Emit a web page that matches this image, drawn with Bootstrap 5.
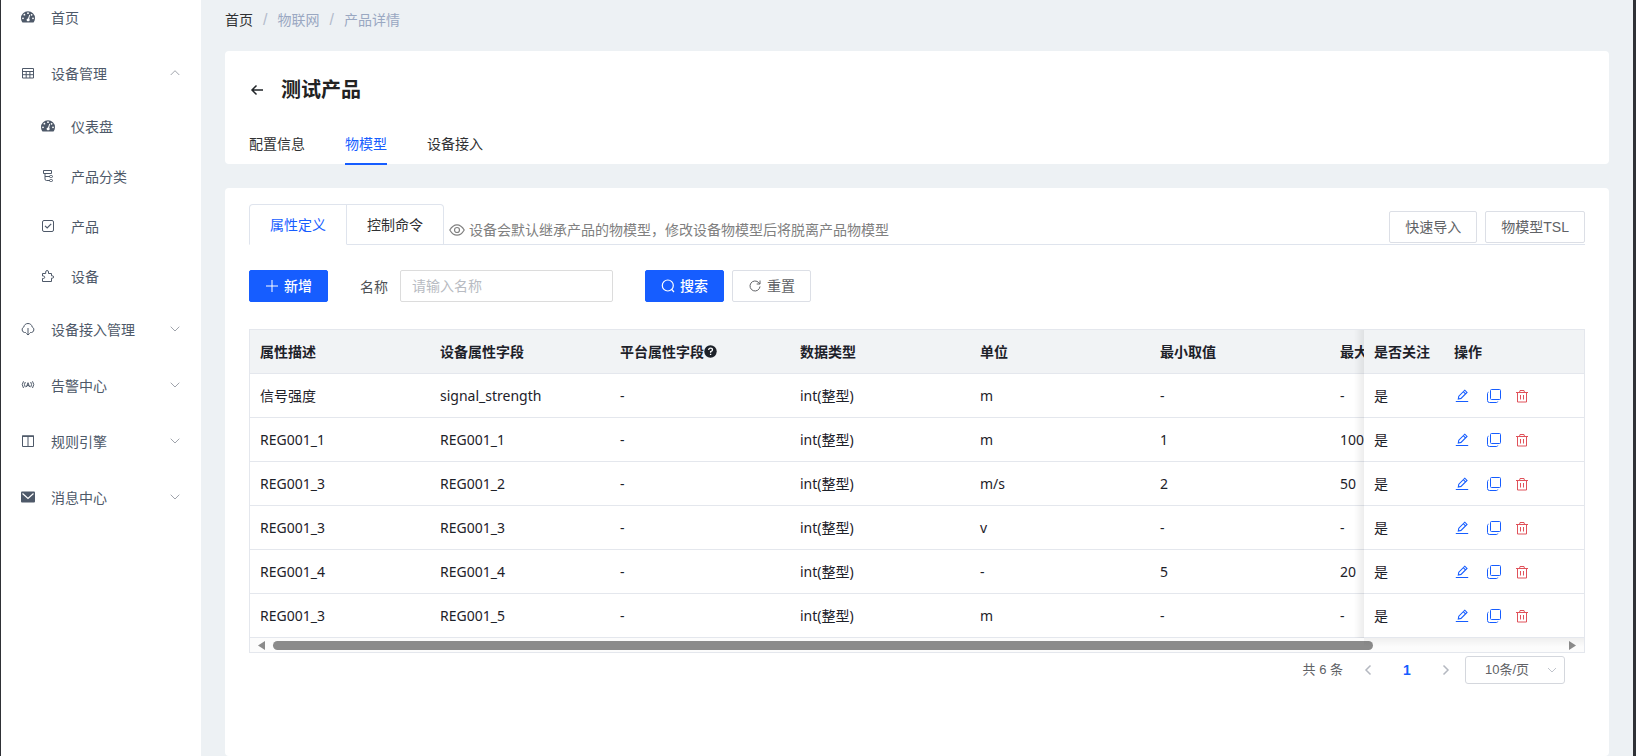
<!DOCTYPE html>
<html lang="zh-CN">
<head>
<meta charset="utf-8">
<meta name="viewport" content="width=device-width, initial-scale=1">
<title>产品详情</title>
<link href="https://cdn.jsdelivr.net/npm/bootstrap@5.3.0/dist/css/bootstrap.min.css" rel="stylesheet">
<style>
:root{--brand:#165dff;--ink:#1d2129;--line:#e4e7ed}
body{font-family:"Liberation Sans","Noto Sans CJK SC",sans-serif;font-size:14px;line-height:22px;color:var(--ink);background:#edf1f4}
a{text-decoration:none}
svg{display:block;flex:none}
.app-shell{min-height:100vh;border-left:1px solid #2f3136;border-right:3px solid #2f3136}
.side-menu{width:200px;flex:none;background:#fff;margin-top:-10px}
.side-menu a{color:#4e5969;height:56px;padding:0 21px 0 20px}
.side-menu a span{margin-left:16px}
.side-menu .sub-item{height:50px;padding-left:40px}
.side-menu .caret{color:#a0a4ac;margin-left:auto}
.side-menu .icon{margin-top:-2px}
.content-area{min-width:0;padding:0 24px}
.app-shell,.content-area{overflow:hidden}
.crumbs{--bs-breadcrumb-divider-color:#b4bccc;height:51px;padding-bottom:11px}
.crumbs .breadcrumb-item+.breadcrumb-item{padding-left:10px}
.crumbs .breadcrumb-item+.breadcrumb-item::before{padding-right:10px;font-size:16px}
.crumbs a{color:#9aa8c2}
.crumbs .home-link{color:#303133}
.panel{background:#fff;border-radius:4px}
.head-panel{height:113px;margin-bottom:24px;padding:27px 24px 0}
.page-title{font-size:20px;line-height:24px;font-weight:700;color:#222}
.line-tabs{gap:40px;margin-top:31px}
.line-tabs a{color:#303133;height:32px}
.line-tabs a.on{color:var(--brand);border-bottom:2px solid var(--brand)}
.body-panel{padding:16px 24px}
.card-tabs{height:41px;border-bottom:1px solid #dfe4ed}
.card-tabs .tab-link{color:#303133;height:41px;padding:0 20px;border:1px solid #dfe4ed;border-left:0;display:flex;align-items:center}
.card-tabs .tab-link.on{color:var(--brand);border-left:1px solid #dfe4ed;border-bottom-color:#fff;border-top-left-radius:4px}
.card-tabs .tab-link:last-of-type{border-top-right-radius:4px}
.hint{color:#808080;margin-left:5px;padding-top:11px}
.tab-actions{padding-bottom:1px}
.tool-btn{--bs-btn-font-size:14px;--bs-btn-line-height:22px;--bs-btn-padding-y:4px;--bs-btn-padding-x:15px;--bs-btn-border-radius:2px;--bs-btn-color:#606266;--bs-btn-bg:#fff;--bs-btn-border-color:#dcdfe6;height:32px;display:flex;align-items:center;gap:5px}
.tool-btn.solid{--bs-btn-color:#fff;--bs-btn-bg:var(--brand);--bs-btn-border-color:var(--brand);font-weight:500}
.filters{margin:25px 0 27px}
.filters label{margin:2px 12px 0 32px;color:#4e5155}
.name-input{width:213px;height:32px;font-size:14px;padding:4px 11px;border:1px solid #dcdcdc;border-radius:2px;margin-right:32px}
.name-input::placeholder{color:#b8bbc2}
.grid-box{border:1px solid var(--line);position:relative}
.grid-scroll{overflow:hidden}
.grid-table{width:1580px;table-layout:fixed;border-collapse:separate;border-spacing:0;font-family:"Noto Sans","Noto Sans CJK SC",sans-serif}
.grid-table th,.grid-table td{height:44px;padding:0 10px;border-bottom:1px solid var(--line);background:#fff;white-space:nowrap}
.grid-table th{background:#f1f3f5;font-weight:700}
.grid-table .pin{position:sticky;z-index:1}
.grid-table .pin-a{right:140px}
.grid-table .pin-b{right:0}
.grid-table .pin-a::before{content:"";position:absolute;top:0;bottom:-1px;right:100%;width:10px;background:linear-gradient(to left,rgba(0,0,0,.07),rgba(0,0,0,0))}
.acts{gap:14px;padding-left:1px}
.act{border:0;background:none;padding:0;color:var(--brand)}
.act.del{color:#e0525a}
.bar{height:14px;background:#fcfcfc;padding:0 8px}
.bar .shade{right:0;top:0;width:220px;height:9px;background:linear-gradient(rgba(0,0,0,.05),rgba(0,0,0,0))}
.bar .track{margin:0 8px;flex:1}
.bar .thumb{width:85.4%;height:9px;border-radius:5px;background:#8b8b8b}
.pager{padding:3px 20px 0 0;color:#606266;font-size:13px}
.pager button{border:0;background:none;padding:0;color:#b4b8c0;height:28px}
.pager .page-no{width:60px;color:var(--brand);font-size:14px}
.size-select{width:100px;height:28px;font-size:13px;line-height:20px;color:#606266;padding:0 0 0 19px;margin-left:10px;border:1px solid #d4d7dd;border-radius:3px;background:#fff url("data:image/svg+xml,%3Csvg xmlns='http://www.w3.org/2000/svg' width='10' height='7' viewBox='0 0 10 7' fill='none' stroke='%23c0c4cc'%3E%3Cpath d='M1 1l4 4 4-4'/%3E%3C/svg%3E") no-repeat right 7px center/10px 7px}
</style>
</head>
<body>
<svg width="0" height="0" class="position-absolute" aria-hidden="true">
 <symbol id="gauge" viewBox="0 0 14 14"><path fill="currentColor" fill-rule="evenodd" d="M7 1.200A7 7 0 0 0 0 8.200c0 1.500.4 2.800 1.100 3.900.1.200.3.300.5.300h10.800c.2 0 .4-.1.500-.3.700-1.100 1.100-2.400 1.100-3.900A7 7 0 0 0 7 1.200zM7 2.300a.9.900 0 1 1 0 1.800.9.900 0 0 1 0-1.800zM3.400 3.800a.9.900 0 1 1 0 1.800.9.900 0 0 1 0-1.800zM2 7.400a.9.900 0 1 1 0 1.800.9.900 0 0 1 0-1.800zM12 7.400a.9.900 0 1 1 0 1.800.9.900 0 0 1 0-1.800zM10.600 3.900a.9.900 0 1 1 0 1.800.9.900 0 0 1 0-1.800zM8.300 4.700l.8.200-.9 3.900c.7.700.7 1.800-.2 2.300-1 .5-2.300 0-2.400-1.100 0-.8.500-1.400 1.400-1.500z"/></symbol>
 <symbol id="tablei" viewBox="0 0 14 14"><path fill="none" stroke="currentColor" d="M1.500 2.500h11v9.500h-11zM1.500 5.500h11M1.500 8.700h11M5.200 5.500V12M8.900 5.500V12"/></symbol>
 <symbol id="tree" viewBox="0 0 14 14"><path fill="none" stroke="currentColor" d="M2.500 1.500h8v3h-8zM4 4.500V10q0 1.500 1.500 1.500H9M4 7.500h5"/><rect x="8.500" y="6.500" width="3" height="2" rx="1" fill="none" stroke="currentColor"/><rect x="8.500" y="10.500" width="3" height="2" rx="1" fill="none" stroke="currentColor"/></symbol>
 <symbol id="check" viewBox="0 0 14 14"><rect x="1.500" y="1.500" width="11" height="11" rx="1.500" fill="none" stroke="currentColor"/><path fill="none" stroke="currentColor" stroke-width="1.200" d="M4 6.800l2.200 2.200 4-4.200"/></symbol>
 <symbol id="puzzle" viewBox="0 0 14 14"><path fill="none" stroke="currentColor" d="M1.500 4.500h3.200V3q0-1.500 1.400-1.500T7.500 3v1.500h3v2.300h.8q1.300 0 1.300 1.200t-1.300 1.200h-.8v3.300h-9V9.500h.9q1.300 0 1.300-1.200T2.400 7h-.9z"/></symbol>
 <symbol id="cloud" viewBox="0 0 14 14"><path fill="none" stroke="currentColor" d="M4.800 10.500H3.500a2.900 2.900 0 0 1-.7-5.500C3.200 2.800 4.800 1.500 7 1.500s3.800 1.300 4.200 3.500a2.900 2.900 0 0 1-.7 5.500H9.200M7 6v7M5.300 11.400L7 13l1.700-1.600"/></symbol>
 <symbol id="signal" viewBox="0 0 14 14"><path fill="none" stroke="currentColor" d="M2.500 3.300Q0 6.500 2.500 10M4.300 4Q2.600 6.500 4.300 9.200M11.500 3.300Q14 6.500 11.500 10M9.700 4Q11.400 6.500 9.700 9.200M5.400 9L7 4.700 8.600 9M6 7.600h2"/></symbol>
 <symbol id="columns" viewBox="0 0 14 14"><path fill="none" stroke="currentColor" d="M1.500 2h11v10.500h-11zM7 2v10.500"/><path fill="none" stroke="currentColor" stroke-width="1.500" d="M1 2.200h12"/></symbol>
 <symbol id="mail" viewBox="0 0 14 14"><rect y="1.500" width="14" height="11" rx="1" fill="currentColor"/><path fill="none" stroke="#fff" stroke-width="1.200" d="M1.500 3.500L7 8.500l5.500-5"/></symbol>
 <symbol id="down" viewBox="0 0 10 6"><path fill="none" stroke="currentColor" d="M.7.700L5 5 9.300.7"/></symbol>
 <symbol id="up" viewBox="0 0 10 6"><path fill="none" stroke="currentColor" d="M.7 5L5 .7 9.300 5"/></symbol>
 <symbol id="edit" viewBox="0 0 14 14"><path fill="none" stroke="currentColor" stroke-width="1.100" d="M.8 12.500h12.400M3.300 10l.5-2.800 6-6 2.200 2.200-6 6zM8.300 2.700l2.200 2.200"/></symbol>
 <symbol id="copy" viewBox="0 0 14 14"><rect x="3.500" y=".5" width="10" height="10" rx="1" fill="none" stroke="currentColor"/><path fill="none" stroke="currentColor" d="M1.500 3.200Q.5 3.500.5 4.500v7a2 2 0 0 0 2 2h7q1 0 1.300-1"/></symbol>
 <symbol id="trash" viewBox="0 0 14 14"><path fill="none" stroke="currentColor" d="M1 3.500h12M2.500 3.500v9.500h9V3.500M4.500 3.500l.5-2h4l.5 2M5.500 6v4.500M8.500 6v4.500"/></symbol>
</svg>
<div class="app-shell d-flex">
 <nav class="side-menu d-flex flex-column">
  <a href="#" class="d-flex align-items-center"><svg class="icon" width="14" height="14"><use href="#gauge"/></svg><span>首页</span></a>
  <a href="#" class="d-flex align-items-center"><svg class="icon" width="14" height="14"><use href="#tablei"/></svg><span>设备管理</span><svg class="icon caret" width="10" height="6"><use href="#up"/></svg></a>
  <a href="#" class="sub-item d-flex align-items-center"><svg class="icon" width="14" height="14"><use href="#gauge"/></svg><span>仪表盘</span></a>
  <a href="#" class="sub-item d-flex align-items-center"><svg class="icon" width="14" height="14"><use href="#tree"/></svg><span>产品分类</span></a>
  <a href="#" class="sub-item d-flex align-items-center"><svg class="icon" width="14" height="14"><use href="#check"/></svg><span>产品</span></a>
  <a href="#" class="sub-item d-flex align-items-center"><svg class="icon" width="14" height="14"><use href="#puzzle"/></svg><span>设备</span></a>
  <a href="#" class="d-flex align-items-center"><svg class="icon" width="14" height="14"><use href="#cloud"/></svg><span>设备接入管理</span><svg class="icon caret" width="10" height="6"><use href="#down"/></svg></a>
  <a href="#" class="d-flex align-items-center"><svg class="icon" width="14" height="14"><use href="#signal"/></svg><span>告警中心</span><svg class="icon caret" width="10" height="6"><use href="#down"/></svg></a>
  <a href="#" class="d-flex align-items-center"><svg class="icon" width="14" height="14"><use href="#columns"/></svg><span>规则引擎</span><svg class="icon caret" width="10" height="6"><use href="#down"/></svg></a>
  <a href="#" class="d-flex align-items-center"><svg class="icon" width="14" height="14"><use href="#mail"/></svg><span>消息中心</span><svg class="icon caret" width="10" height="6"><use href="#down"/></svg></a>
 </nav>
 <main class="content-area flex-grow-1 d-flex flex-column">
  <ol class="crumbs breadcrumb align-items-center mb-0">
   <li class="breadcrumb-item"><a href="#" class="home-link">首页</a></li>
   <li class="breadcrumb-item"><a href="#">物联网</a></li>
   <li class="breadcrumb-item"><a href="#">产品详情</a></li>
  </ol>
  <section class="panel head-panel">
   <div class="d-flex align-items-center gap-3">
    <a href="#" class="text-dark" aria-label="返回"><svg width="16" height="16" viewBox="0 0 16 16" fill="none" stroke="currentColor" stroke-width="1.500"><path d="M14 8H3M7.500 3.500L3 8l4.500 4.500"/></svg></a>
    <h1 class="page-title mb-0">测试产品</h1>
   </div>
   <nav class="line-tabs d-flex"><a href="#">配置信息</a><a href="#" class="on">物模型</a><a href="#">设备接入</a></nav>
  </section>
  <section class="panel body-panel flex-grow-1">
   <div class="card-tabs d-flex">
    <a href="#" class="tab-link on">属性定义</a><a href="#" class="tab-link">控制命令</a>
    <div class="hint d-flex align-items-center gap-1"><svg width="16" height="16" viewBox="0 0 16 16" fill="none" stroke="currentColor" stroke-width="1.200"><path d="M.8 8C3 4.200 5.500 2.800 8 2.800S13 4.200 15.200 8C13 11.800 10.500 13.200 8 13.200S3 11.800.8 8z"/><circle cx="8" cy="8" r="2.500"/></svg><span>设备会默认继承产品的物模型，修改设备物模型后将脱离产品物模型</span></div>
    <div class="tab-actions d-flex gap-2 ms-auto align-self-end"><button type="button" class="btn tool-btn">快速导入</button><button type="button" class="btn tool-btn">物模型TSL</button></div>
   </div>
   <form class="filters d-flex align-items-center">
    <button type="button" class="btn tool-btn solid"><svg width="14" height="14" viewBox="0 0 14 14" stroke="currentColor" fill="none"><path d="M7 1v12M1 7h12"/></svg>新增</button>
    <label for="pname">名称</label>
    <input id="pname" type="text" class="form-control name-input" placeholder="请输入名称">
    <button type="button" class="btn tool-btn solid me-2"><svg width="14" height="14" viewBox="0 0 14 14" stroke="currentColor" stroke-width="1.200" fill="none"><circle cx="6.800" cy="6.500" r="5.500"/><path d="M10.700 10.500L13 13"/></svg>搜索</button>
    <button type="reset" class="btn tool-btn"><svg width="14" height="14" viewBox="0 0 14 14" stroke="currentColor" fill="none"><path d="M12 7.500A5 5 0 1 1 10.800 3.700L12 5M12 1.500V5H8.700"/></svg>重置</button>
   </form>
   <div class="grid-box">
    <div class="grid-scroll">
     <table class="grid-table">
      <colgroup><col width="180"><col width="180"><col width="180"><col width="180"><col width="180"><col width="180"><col width="280"><col width="80"><col width="140"></colgroup>
      <thead><tr><th>属性描述</th><th>设备属性字段</th><th><span class="d-flex align-items-center">平台属性字段<svg width="13" height="13" viewBox="0 0 13 13"><circle cx="6.500" cy="6.500" r="6.200" fill="currentColor"/><path d="M4.700 5q0-1.900 1.900-1.900T8.500 4.900Q8.500 6 6.600 6.600v1.200M6.600 8.700v1.400" fill="none" stroke="#fff" stroke-width="1.300"/></svg></span></th><th>数据类型</th><th>单位</th><th>最小取值</th><th>最大</th><th class="pin pin-a">是否关注</th><th class="pin pin-b">操作</th></tr></thead>
      <tbody id="rows"></tbody>
     </table>
    </div>
    <div class="bar d-flex align-items-center position-relative">
     <div class="shade position-absolute"></div>
     <svg width="7" height="9" viewBox="0 0 7 9"><path d="M7 0v9L0 4.500z" fill="#8b8b8b"/></svg>
     <div class="track"><div class="thumb"></div></div>
     <svg width="7" height="9" viewBox="0 0 7 9"><path d="M0 0v9l7-4.500z" fill="#8b8b8b"/></svg>
    </div>
   </div>
   <div class="pager d-flex align-items-center justify-content-end">
    <span class="me-3">共 6 条</span>
    <button type="button" class="px-1" aria-label="上一页"><svg width="10" height="12" viewBox="0 0 10 12" fill="none" stroke="currentColor" stroke-width="1.500"><path d="M7.500 1.500L3 6l4.500 4.500"/></svg></button>
    <button type="button" class="page-no fw-bold">1</button>
    <button type="button" class="px-1" aria-label="下一页"><svg width="10" height="12" viewBox="0 0 10 12" fill="none" stroke="currentColor" stroke-width="1.500"><path d="M2.500 1.500L7 6l-4.500 4.500"/></svg></button>
    <select class="form-select size-select" aria-label="每页条数"><option>10条/页</option><option>20条/页</option></select>
   </div>
  </section>
 </main>
</div>
<script>
const data=[["信号强度","signal_strength","m","-","-"],["REG001_1","REG001_1","m","1","100"],["REG001_3","REG001_2","m/s","2","50"],["REG001_3","REG001_3","v","-","-"],["REG001_4","REG001_4","-","5","20"],["REG001_3","REG001_5","m","-","-"]];
const icon=id=>`<svg width="14" height="14"><use href="#${id}"/></svg>`;
document.getElementById("rows").innerHTML=data.map(([desc,field,unit,min,max])=>
 `<tr><td>${desc}</td><td>${field}</td><td>-</td><td>int(整型)</td><td>${unit}</td><td>${min}</td><td>${max}</td><td class="pin pin-a">是</td><td class="pin pin-b"><div class="acts d-flex align-items-center"><button type="button" class="act me-1" aria-label="编辑">${icon("edit")}</button><button type="button" class="act" aria-label="复制">${icon("copy")}</button><button type="button" class="act del" aria-label="删除">${icon("trash")}</button></div></td></tr>`).join("");
</script>
<script src="https://cdn.jsdelivr.net/npm/bootstrap@5.3.0/dist/js/bootstrap.bundle.min.js"></script>
</body>
</html>
